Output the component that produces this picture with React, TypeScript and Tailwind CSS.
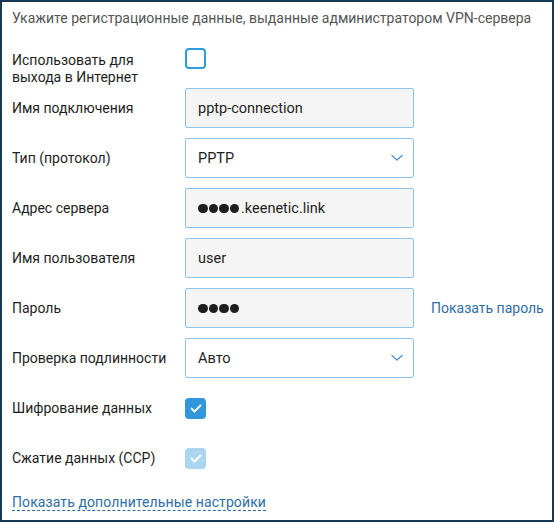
import React from 'react';

const font = { fontFamily: 'Roboto, "Noto Sans", sans-serif' };

function Chevron() {
  return (
    <svg width="12" height="8" viewBox="0 0 12 8" className="absolute right-[10px] top-1/2 -translate-y-1/2">
      <path d="M1 1.5 L6 6 L11 1.5" fill="none" stroke="#5a92cc" strokeWidth="1.4" strokeLinecap="round" strokeLinejoin="round" />
    </svg>
  );
}

function Dots() {
  return (
    <span className="flex items-center gap-[1px]">
      {[0, 1, 2, 3].map((i) => (
        <span key={i} className="w-[9.5px] h-[9.5px] rounded-full bg-[#1e1e1e]" />
      ))}
    </span>
  );
}

function Field({ children, select }: { children: React.ReactNode; select?: boolean }) {
  return (
    <div
      className={`relative w-[229px] h-[40px] flex items-center pl-[12px] pt-[1px] rounded-[2px] border border-[#8cc4ea] text-[14.5px] text-[#1e1e1e] ${
        select ? 'bg-white' : 'bg-[#f5f5f5]'
      }`}
    >
      {children}
      {select && <Chevron />}
    </div>
  );
}

function Check({ state }: { state: 'off' | 'on' | 'disabled' }) {
  if (state === 'off') {
    return <div className="w-[21px] h-[21px] rounded-[4px] border-2 border-[#2f9be0] bg-white" />;
  }
  return (
    <div
      className={`w-[21px] h-[21px] rounded-[4px] flex items-center justify-center ${
        state === 'on' ? 'bg-[#3196db]' : 'bg-[#acd5f1]'
      }`}
    >
      <svg width="12" height="9" viewBox="0 0 12 9">
        <path d="M1.5 4.5 L4.5 7.5 L10.5 1.5" fill="none" stroke="white" strokeWidth="1.8" strokeLinecap="round" strokeLinejoin="round" />
      </svg>
    </div>
  );
}

function Row({ label, children, extra }: { label: React.ReactNode; children: React.ReactNode; extra?: React.ReactNode }) {
  return (
    <div className="flex items-center h-[40px]">
      <div className="w-[173px] pt-[1px] text-[14px] text-[#1e1e1e] leading-[17px]">{label}</div>
      {children}
      {extra}
    </div>
  );
}

export default function App() {
  return (
    <div style={font} className="w-[554px] h-[522px] bg-white border-[2px] border-[#153a53] pl-[10px] overflow-hidden">
      <div className="pt-[6px] h-[46px] text-[14px] leading-[20px] text-[#555]">
        Укажите регистрационные данные, выданные администратором VPN-сервера
      </div>

      <div className="flex items-start h-[40px]">
        <div className="w-[173px] pt-[4px] text-[14px] text-[#1e1e1e] leading-[17px]">
          Использовать для
          <br />
          выхода в Интернет
        </div>
        <Check state="off" />
      </div>

      <div className="flex flex-col gap-[10px]">
        <Row label="Имя подключения">
          <Field>pptp-connection</Field>
        </Row>
        <Row label="Тип (протокол)">
          <Field select>PPTP</Field>
        </Row>
        <Row label="Адрес сервера">
          <Field>
            <Dots />
            <span className="ml-[2px]">.keenetic.link</span>
          </Field>
        </Row>
        <Row label="Имя пользователя">
          <Field>user</Field>
        </Row>
        <Row
          label="Пароль"
          extra={<span className="ml-[17px] pt-[1px] text-[14px] text-[#2e6ea6] cursor-pointer">Показать пароль</span>}
        >
          <Field>
            <Dots />
          </Field>
        </Row>
        <Row label="Проверка подлинности">
          <Field select>Авто</Field>
        </Row>
        <Row label="Шифрование данных">
          <Check state="on" />
        </Row>
        <Row label="Сжатие данных (CCP)">
          <Check state="disabled" />
        </Row>
      </div>

      <div className="h-[28px] mt-[10px] flex items-center">
        <span className="text-[14px] tracking-[0.1px] text-[#2e6ea6] border-b border-dashed border-[#2e6ea6] leading-[16px] cursor-pointer">
          Показать дополнительные настройки
        </span>
      </div>
    </div>
  );
}
